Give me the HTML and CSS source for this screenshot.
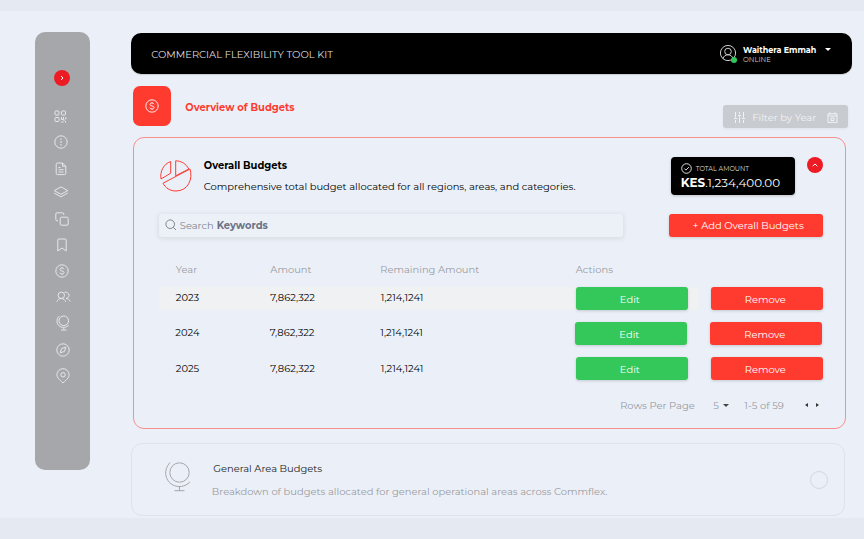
FILE: index.html
```
<!DOCTYPE html>
<html lang="en">
<head>
<meta charset="utf-8">
<title>Commercial Flexibility Tool Kit</title>
<link rel="stylesheet" href="styles.css">
</head>
<body>
<svg class="defs" aria-hidden="true">
  <symbol id="dollar" viewBox="0 0 14 14"><circle cx="7" cy="7" r="6.2"/><path d="M9 5.2C8.700 4.400 8 4 7 4c-1.200 0-2 .6-2 1.500C5 7.500 9 6.500 9 8.500c0 .9-.8 1.500-2 1.500-1.100 0-1.800-.5-2.100-1.300M7 3.200v.8M7 10v.8"/></symbol>
  <symbol id="globe" viewBox="0 0 28 32"><circle cx="15.500" cy="11.500" r="9.700"/><path d="M6 1.500C-1 9 1 19 8 23.500c6 3.500 13 2.500 18-2.500M15.500 25.500v4M10.500 29.700h10"/></symbol>
</svg>
<div class="frame">
  <nav class="sidebar">
    <button class="toggle" aria-label="Expand"><svg width="6" height="6" viewBox="0 0 6 6"><path d="M2 1l2 2-2 2"/></svg></button>
    <svg class="nav-icon grid-icon" width="13" height="13" viewBox="0 0 13 13"><rect x="1" y="1" width="4" height="4" rx=".7"/><rect x="7.500" y="1" width="4" height="4" rx=".7"/><rect x="1" y="7.500" width="4" height="4" rx=".7"/><path d="M7.500 7v2.500h2V7M11.800 7v2.500M7.200 12h2.300M11.500 11v1.500M10 9.500v1.500"/></svg>
    <svg class="nav-icon info-icon" width="14" height="14" viewBox="0 0 14 14"><circle cx="7" cy="7" r="6.200"/><path d="M7 3.400v1.400M7 6.300v1.400M7 9.200v1.400" stroke-width="1.300"/></svg>
    <svg class="nav-icon doc-icon" width="12" height="14" viewBox="0 0 12 14"><path d="M7.500 1H2.500Q1.200 1 1.200 2.300v9q0 1.300 1.300 1.300h7q1.300 0 1.300-1.300V4.300zM7.500 1v3.300h3.300M3.500 5.500h2M3.500 7.700h5M3.500 10h5"/></svg>
    <svg class="nav-icon layers-icon" width="16" height="12" viewBox="0 0 16 12"><path d="M8 .9L1.200 4.600 8 8.300l6.800-3.700zM1.200 7L8 10.900 14.800 7"/></svg>
    <svg class="nav-icon copy-icon" width="14" height="14" viewBox="0 0 14 14"><rect x="5.200" y="5.200" width="8" height="8" rx="1.200"/><path d="M3 8.800H2Q.8 8.800.8 7.600V2Q.8.800 2 .800h5.600q1.200 0 1.200 1.200v1"/></svg>
    <svg class="nav-icon mark-icon" width="10" height="14" viewBox="0 0 10 14"><path d="M.8 2Q.8 1 1.800 1h6.400q1 0 1 1v11L5 10 .8 13z"/></svg>
    <svg class="nav-icon money-icon" width="14" height="14"><use href="#dollar"/></svg>
    <svg class="nav-icon users-icon" width="15" height="12" viewBox="0 0 15 12"><circle cx="5.300" cy="4.300" r="3.200"/><path d="M.8 10.800c.8-2.200 2.500-3.300 4.500-3.300s3.700 1.100 4.500 3.300M8.500 1.300c2.200-.8 4.500.8 4.500 3 0 1.700-1.300 3.100-3 3.200 1.900 0 3.500 1.100 4.200 3"/></svg>
    <svg class="nav-icon globe-icon" width="14" height="16" viewBox="0 0 14 16"><circle cx="7.800" cy="5.800" r="4.800"/><path d="M3.200 1C-.2 4.500.600 9.500 4 11.500c3 1.600 6.400 1 8.800-1.400M7.800 12.300v2.400M5 15h5.600"/></svg>
    <svg class="nav-icon compass-icon" width="14" height="14" viewBox="0 0 14 14"><circle cx="7" cy="7" r="6.200"/><path d="M9.900 4.100L8.400 8.400 4.100 9.900 5.600 5.600z"/></svg>
    <svg class="nav-icon pin-icon" width="14" height="16" viewBox="0 0 14 16"><path d="M7 15C3.500 11.800.9 9.500.9 6.800a6.100 6.100 0 0112.200 0C13.100 9.500 10.500 11.800 7 15z"/><circle cx="7" cy="6.800" r="2.200"/></svg>
  </nav>

  <main class="content">
    <header class="topbar">
      <h1 class="brand">COMMERCIAL FLEXIBILITY TOOL KIT</h1>
      <div class="user">
        <div class="avatar">
          <svg width="18" height="18" viewBox="0 0 18 18"><circle cx="9" cy="9" r="7.600"/><circle cx="9" cy="7.500" r="3.300"/><path d="M4 14.700c.6-2.500 2.500-3.900 5-3.900s4.400 1.400 5 3.900"/></svg>
          <span class="presence"></span>
        </div>
        <div class="who"><b class="user-name">Waithera Emmah</b><span class="status">ONLINE</span></div>
        <span class="caret"></span>
      </div>
    </header>

    <section class="heading">
      <div class="heading-icon"><svg width="14" height="14"><use href="#dollar"/></svg></div>
      <h2 class="heading-title">Overview of Budgets</h2>
      <button class="filter">
        <svg width="11" height="11" viewBox="0 0 11 11"><path d="M1.500 0v5.500M1.500 8v3M5.500 0v2M5.500 4.500V11M9.500 0v5.500M9.500 8v3M0 6.500h3M4 3.500h3M8 6.500h3"/></svg>
        <span>Filter by Year</span>
        <svg width="11" height="11" viewBox="0 0 11 11"><path d="M1 1.800h9v8.600H1zM1 4h9M3 .3v2M8 .3v2M4 6h3v2.500H4z"/></svg>
      </button>
    </section>

    <section class="card">
      <div class="card-head">
        <svg class="pie" width="32" height="33" viewBox="0 0 32 33"><path d="M10.700 1.500v11.700L1 19C-.2 11.500 3.500 4 10.700 1.500zM15.700.8v15L28.800 9C26 3.800 21.500 1 15.700.8zM30 9c3.200 10-2 22-14 22C10 31 5.500 28 3 23.200z"/></svg>
        <div class="card-text">
          <h3 class="card-title">Overall Budgets</h3>
          <p class="card-desc">Comprehensive total budget allocated for all regions, areas, and categories.</p>
        </div>
        <div class="total">
          <div class="total-label"><svg width="11" height="11" viewBox="0 0 11 11"><circle cx="5.500" cy="5.500" r="4.800"/><path d="M3.300 5.500l1.600 1.600 3-3"/></svg><span>TOTAL AMOUNT</span></div>
          <div class="total-value"><b>KES</b><span>.1,234,400.00</span></div>
        </div>
        <button class="collapse" aria-label="Collapse"><svg width="8" height="6" viewBox="0 0 8 6"><path d="M1.700 4.200L4 2l2.300 2.200"/></svg></button>
      </div>

      <div class="tools">
        <div class="search">
          <svg width="12" height="12" viewBox="0 0 12 12"><circle cx="5.200" cy="5.200" r="4.300"/><path d="M8.300 8.300l2.700 2.700"/></svg>
          <span class="hint">Search</span><b class="keywords">Keywords</b>
        </div>
        <button class="add">+ Add Overall Budgets</button>
      </div>

      <div class="table">
        <div class="row head"><span>Year</span><span>Amount</span><span>Remaining Amount</span><span>Actions</span></div>
        <div class="row active"><span>2023</span><span>7,862,322</span><span class="rest">1,214,1241</span><button class="edit">Edit</button><button class="remove">Remove</button></div>
        <div class="row shifted"><span>2024</span><span>7,862,322</span><span class="rest">1,214,1241</span><button class="edit">Edit</button><button class="remove">Remove</button></div>
        <div class="row"><span>2025</span><span>7,862,322</span><span class="rest">1,214,1241</span><button class="edit">Edit</button><button class="remove">Remove</button></div>
      </div>

      <div class="pager">
        <span>Rows Per Page</span><span class="size">5</span><span class="caret dark"></span><span class="range">1-5 of 59</span><span class="prev"></span><span class="next"></span>
      </div>
    </section>

    <section class="card-closed">
      <svg class="area-icon" width="28" height="32"><use href="#globe"/></svg>
      <div class="area-text">
        <h3 class="area-title">General Area Budgets</h3>
        <p class="area-desc">Breakdown of budgets allocated for general operational areas across Commflex.</p>
      </div>
      <span class="radio"></span>
    </section>
  </main>
</div>
</body>
</html>
```
FILE: styles.css
```
* { box-sizing: border-box; }
body {
  margin: 0; height: 539px; overflow: hidden; padding: 11px 0 21px;
  background: #e4e9f2; color: #000;
  font: 400 9.930px/14px Montserrat, Inter, sans-serif;
}
h1, h2, h3, p { margin: 0; font-size: inherit; font-weight: 400; }
button { border: 0; padding: 0; margin: 0; font: inherit; color: #fff; display: flex; align-items: center; justify-content: center; }
svg { display: block; fill: none; stroke: currentColor; flex: none; }
.defs { display: none; }
span, p, h1, h2, h3, b { white-space: nowrap; }

.frame { display: flex; height: 507px; background: #ebf0f8; padding: 20.500px 0 0 35.300px; }

.sidebar { width: 54.500px; height: 438.500px; border-radius: 10px; background: #a6a7aa; color: #e9eaed; display: flex; flex-direction: column; align-items: center; padding-top: 38px; flex: none; }
.nav-icon { stroke-width: .95; }
.toggle { width: 16px; height: 16px; border-radius: 50%; background: #ed1c24; margin-right: 2px; margin-bottom: 24.500px; }
.grid-icon { margin: 0 4px 12px 0; }
.info-icon { margin: 0 4px 12.500px 0; }
.doc-icon { margin: 0 4px 10.500px 0; }
.layers-icon { margin: 0 3px 13.500px 0; }
.copy-icon { margin: 0 2px 12.500px 0; }
.mark-icon { margin: 0 2px 12px 0; }
.money-icon { margin: 0 1px 13px 0; }
.users-icon { margin: 0 0 12px 1px; }
.globe-icon { margin-bottom: 12px; }
.compass-icon { margin-bottom: 10.500px; }

.content { margin-left: 41.500px; width: 721px; display: flex; flex-direction: column; padding-top: 1px; flex: none; }

.topbar { height: 41px; flex: none; background: #000; border-radius: 10px; display: flex; align-items: center; justify-content: space-between; padding: 0 21px 0 20px; color: #fff; box-shadow: 0 1px 1px rgba(0, 0, 0, .15); }
.brand { color: #ddd; padding-top: 1px; }
.user { display: flex; align-items: center; }
.avatar { position: relative; color: #ccc; margin-right: 6px; }
.presence { position: absolute; right: 0; bottom: -1px; width: 6px; height: 6px; border-radius: 50%; background: #34c759; }
.who { display: flex; flex-direction: column; line-height: 9px; padding-top: 4px; }
.user-name { font-size: 8px; }
.status { font-size: 6.900px; color: #ccc; }
.caret { border: 3px solid transparent; border-top-color: #fff; border-bottom: 0; margin: -8px 0 0 9px; }

.heading { display: flex; height: 62px; padding: 12.500px 4px 0 1.500px; flex: none; }
.heading-icon { width: 38.500px; height: 39.500px; border-radius: 7px; background: #ff3b30; color: #fff; display: flex; align-items: center; justify-content: center; }
.heading-icon svg { stroke-width: .9; }
.heading-title { margin: 14px auto 0 14px; font-weight: 700; color: #ff3b30; }
.filter { width: 125px; height: 23px; margin-top: 19px; border-radius: 3px; background: #c8cbd0; color: #f2f3f6; gap: 7px; justify-content: flex-start; padding: 1px 0 0 11px; box-shadow: 0 1px 3px rgba(0, 0, 0, .06); }
.filter svg:last-child { margin-left: 4px; }

.card { width: 713.500px; height: 292px; margin: 1px 0 0 1.500px; border: 1px solid #f98f8d; border-radius: 11px; padding: 0 22px 0 25px; flex: none; }
.card-head { display: flex; height: 76px; }
.pie { margin: 22.500px 0 0 1px; color: #ff3b30; }
.card-text { margin: 20px 0 0 12px; width: 467px; }
.card-title { font-weight: 700; color: #000; }
.card-desc { margin-top: 7px; }
.total { width: 124px; height: 38px; margin-top: 19px; background: #000; color: #fff; border-radius: 4px; padding: 6px 0 0 10px; box-shadow: 0 1px 3px rgba(0, 0, 0, .2); }
.total-label { display: flex; align-items: center; gap: 4px; height: 12px; font-size: 6.500px; color: #ddd; }
.total-value { font-size: 11.900px; line-height: 16px; }
.collapse { width: 16px; height: 16px; margin: 19px 0 0 12px; border-radius: 50%; background: #ed1c24; }

.tools { display: flex; height: 23px; justify-content: space-between; }
.search { width: 464px; border-radius: 3px; display: flex; align-items: center; padding-left: 6.500px; color: #7e8490; background: #ecf1f7; box-shadow: 0 1px 4px 1px rgba(90, 90, 80, .12); }
.search svg { margin-right: 2.500px; }
.hint { margin-right: 3px; }
.keywords { color: #6b7285; }
.add { width: 154px; border-radius: 3px; background: #ff3b30; padding-left: 4px; box-shadow: 0 1px 3px rgba(0, 0, 0, .15); }

.table { display: flex; flex-direction: column; margin-top: 25.500px; }
.row { display: grid; grid-template-columns: 94.500px 110px 195.500px 135px 112px; align-items: center; height: 23px; margin-bottom: 12.300px; padding-left: 17px; }
.row > span { padding-bottom: 2px; }
.row:last-child > span { padding-bottom: 1px; }
.row .rest { padding-left: .5px; }
.row.head { height: 14px; margin-bottom: 10.500px; color: #999ba0; }
.row.head > span { padding: 0; }
.row.active { background: linear-gradient(90deg, #eff1f3 540px, transparent 540px); }
.row.shifted { padding-left: 16.500px; }
.edit, .remove { width: 112px; height: 23px; border-radius: 3px; box-shadow: 0 1px 3px rgba(0, 0, 0, .17); padding-top: 1px; }
.edit { background: #34c759; padding-right: 4px; }
.remove { background: #ff3b30; padding-right: 3px; }

.pager { display: flex; align-items: center; justify-content: flex-end; height: 14px; margin-top: 6px; color: #97999f; padding-right: 4px; }
.size { margin-left: 18.500px; }
.caret.dark { border-top-color: #444; margin: 0 0 0 4.500px; border-width: 3px 3px 0; }
.range { margin: 0 21.500px 0 15px; }
.prev, .next { border: 2.500px solid transparent; }
.prev { border-left: 0; border-right: 3px solid #333; }
.next { border-right: 0; border-left: 3px solid #333; margin-left: 8px; }

.card-closed { width: 713.500px; height: 72.500px; flex: none; margin-top: 14.500px; border: 1.500px solid #dfe2e6; border-radius: 11px; display: flex; padding: 0 15.500px 0 32px; }
.area-icon { margin-top: 17px; color: #a4a6aa; }
.area-text { margin: 17px auto 0 19.500px; }
.area-title { padding-left: 1.500px; color: #222; }
.area-desc { margin-top: 9px; color: #9b9a9e; }
.radio { width: 18px; height: 18px; border: 1px solid #d5d7db; border-radius: 50%; margin-top: 27px; }
```
